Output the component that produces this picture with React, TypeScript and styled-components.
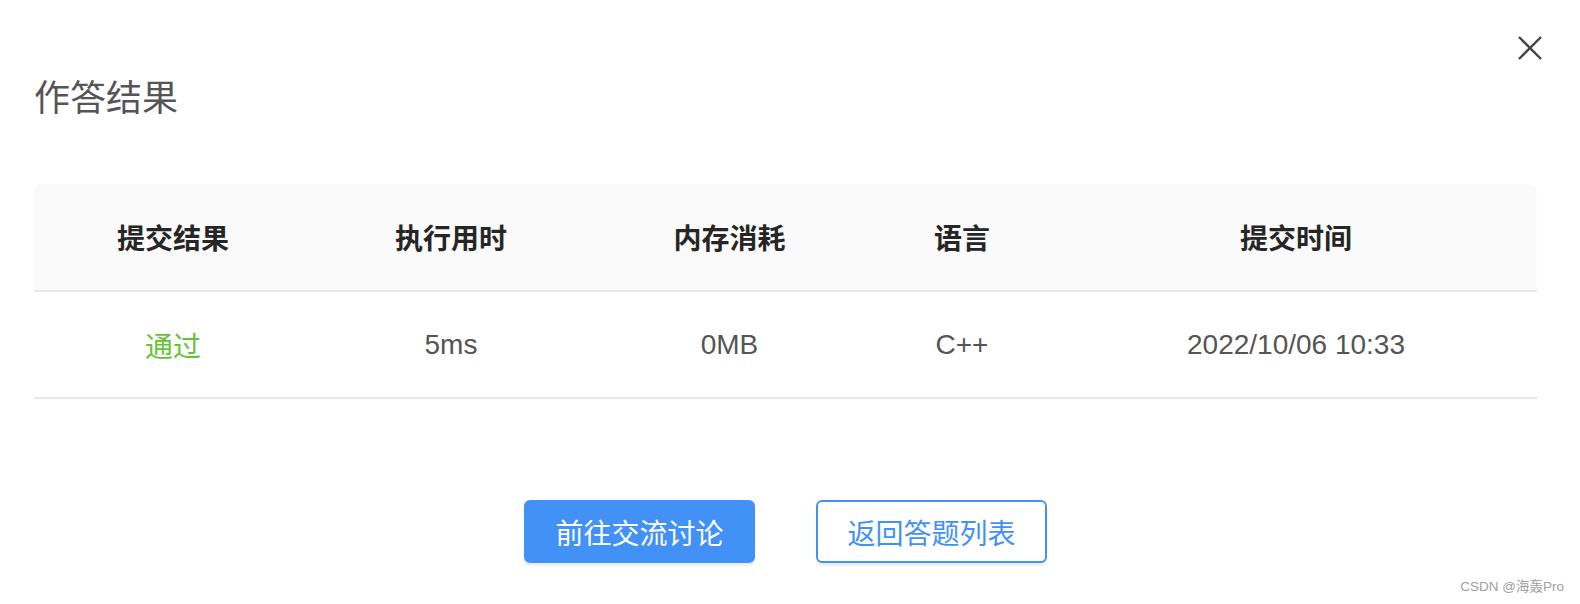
import React from 'react';
import styled, { createGlobalStyle } from 'styled-components';

const GlobalStyle = createGlobalStyle`
  html, body {
    margin: 0;
    padding: 0;
    background: #ffffff;
  }
  body {
    font-family: "Liberation Sans", "Noto Sans CJK SC", sans-serif;
  }
`;

const BLUE = '#4191f6';

const Dialog = styled.div`
  position: relative;
  box-sizing: border-box;
  width: 1580px;
  height: 604px;
  padding: 77px 43px 0 34px;
  background: #fff;
`;

const CloseBtn = styled.button`
  position: absolute;
  top: 36px;
  right: 38px;
  width: 24px;
  height: 24px;
  padding: 0;
  border: 0;
  background: none;
  cursor: pointer;
  svg { display: block; }
`;

const Title = styled.h2`
  margin: 0;
  font-family: "Noto Sans CJK SC", sans-serif;
  font-size: 36px;
  line-height: 36px;
  font-weight: 400;
  color: #555555;
`;

const Table = styled.div`
  margin-top: 71px;
`;

const Row = styled.div<{ $head?: boolean }>`
  display: grid;
  grid-template-columns: 278px 278px 279px 186px 1fr;
  height: ${p => (p.$head ? 106 : 105)}px;
  align-items: center;
  border-bottom: 2px solid #e8e8e8;
  background: ${p => (p.$head ? '#fafafa' : '#fff')};
  border-radius: ${p => (p.$head ? '8px 8px 0 0' : '0')};
`;

const HeadCell = styled.div`
  text-align: center;
  font-family: "Noto Sans CJK SC", sans-serif;
  font-size: 28px;
  font-weight: 700;
  color: #262626;
`;

const Cell = styled.div<{ $ok?: boolean }>`
  text-align: center;
  font-family: "Liberation Sans", "Noto Sans CJK SC", sans-serif;
  font-size: 28px;
  color: ${p => (p.$ok ? '#67c23a' : '#555555')};
`;

const Actions = styled.div`
  display: flex;
  justify-content: center;
  gap: 61px;
  margin-top: 101px;
`;

const Button = styled.button<{ $primary?: boolean }>`
  box-sizing: border-box;
  width: 231px;
  height: 63px;
  border-radius: 6px;
  border: 2px solid ${BLUE};
  background: ${p => (p.$primary ? BLUE : '#fff')};
  color: ${p => (p.$primary ? '#fff' : BLUE)};
  font-family: "Noto Sans CJK SC", sans-serif;
  font-size: 28px;
  box-shadow: 0 3px 2px rgba(0, 0, 0, 0.07);
  cursor: pointer;
`;

const Watermark = styled.div`
  position: absolute;
  right: 16px;
  bottom: 9px;
  font-family: "Liberation Sans", "Noto Sans CJK SC", sans-serif;
  font-size: 13.5px;
  color: #a0a0a0;
`;

const headers = ['提交结果', '执行用时', '内存消耗', '语言', '提交时间'];

export default function App() {
  return (
    <>
      <GlobalStyle />
      <Dialog>
        <CloseBtn aria-label="close">
          <svg width="24" height="24" viewBox="0 0 24 24">
            <path d="M1 1 L23 23 M23 1 L1 23" stroke="#444" strokeWidth="2.4" fill="none" />
          </svg>
        </CloseBtn>
        <Title>作答结果</Title>
        <Table>
          <Row $head>
            {headers.map(h => (
              <HeadCell key={h}>{h}</HeadCell>
            ))}
          </Row>
          <Row>
            <Cell $ok>通过</Cell>
            <Cell>5ms</Cell>
            <Cell>0MB</Cell>
            <Cell>C++</Cell>
            <Cell>2022/10/06 10:33</Cell>
          </Row>
        </Table>
        <Actions>
          <Button $primary>前往交流讨论</Button>
          <Button>返回答题列表</Button>
        </Actions>
        <Watermark>CSDN @海轰Pro</Watermark>
      </Dialog>
    </>
  );
}
